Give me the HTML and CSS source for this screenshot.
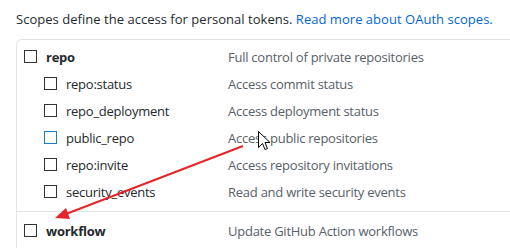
FILE: index.html
```html
<!DOCTYPE html>
<html>
<head>
<meta charset="utf-8">
<link rel="stylesheet" href="styles.css">
</head>
<body>
<div class="page">
  <p class="intro">Scopes define the access for personal tokens. <a href="#">Read more about OAuth scopes.</a></p>
  <div class="box">
    <div class="group">
      <div class="row top"><span class="cb"></span><span class="name">repo</span><span class="desc">Full control of private repositories</span></div>
      <div class="row sub"><span class="cb"></span><span class="name">repo:status</span><span class="desc">Access commit status</span></div>
      <div class="row sub"><span class="cb"></span><span class="name">repo_deployment</span><span class="desc">Access deployment status</span></div>
      <div class="row sub"><span class="cb hover"></span><span class="name">public_repo</span><span class="desc">Access public repositories</span></div>
      <div class="row sub"><span class="cb"></span><span class="name">repo:invite</span><span class="desc">Access repository invitations</span></div>
      <div class="row sub"><span class="cb"></span><span class="name">security_events</span><span class="desc">Read and write security events</span></div>
    </div>
    <div class="group last">
      <div class="row top"><span class="cb"></span><span class="name">workflow</span><span class="desc">Update GitHub Action workflows</span></div>
    </div>
  </div>
  <svg class="annot" width="510" height="248" viewBox="0 0 510 248">
    <line x1="243" y1="146" x2="66" y2="214" stroke="#e3262a" stroke-width="2"/>
    <polygon points="55,218 66,208 70,219" fill="#e3262a"/>
  </svg>
  <svg class="cursor" width="13" height="20" viewBox="0 0 13 20">
    <path d="M0.5 0.5 L0.5 16.5 L4.5 12.5 L7 18.5 L9.5 17.5 L7 11.5 L12 11.5 Z" fill="#fff" stroke="#000" stroke-width="1" stroke-linejoin="miter"/>
  </svg>
</div>
</body>
</html>
```

FILE: styles.css
```css
* { box-sizing: border-box; }
html, body { margin: 0; padding: 0; background: #fff; }
body {
  font-family: "Open Sans", "Noto Sans", "Liberation Sans", sans-serif;
  font-size: 13px;
  color: #24292e;
  width: 510px;
  height: 248px;
  overflow: hidden;
}
.page {
  position: relative;
  padding: 9px 0 0 16px;
  width: 510px;
  height: 248px;
}
.intro {
  margin: 0;
  line-height: 20px;
  color: #24292e;
  white-space: nowrap;
  letter-spacing: 0.03px;
}
.intro a { color: #0366d6; text-decoration: none; }
.box {
  margin-top: 10px;
  border: 1px solid #e1e4e8;
  border-right: 0;
  border-radius: 6px 0 0 6px;
}
.group { padding: 3px 0 6px 7px; }
.group.last { border-top: 1px solid #e1e4e8; padding: 5px 0 8px 7px; }
.row {
  display: grid;
  grid-template-columns: 204px 1fr;
  align-items: center;
  height: 27px;
  letter-spacing: -0.25px;
}
.row > .cb { grid-column: 1; grid-row: 1; }
.row > .name { grid-column: 1; grid-row: 1; }
.row > .desc { grid-column: 2; grid-row: 1; color: #586069; white-space: nowrap; }
.cb {
  width: 13px;
  height: 13px;
  border: 1px solid #333;
  background: #fff;
}
.cb.hover { border-color: #1a7bc8; }
.top .name { padding-left: 22px; font-weight: 700; }
.sub .cb { margin-left: 20px; }
.sub .name { padding-left: 42px; }
.annot { position: absolute; left: 0; top: 0; pointer-events: none; }
.cursor { position: absolute; left: 258px; top: 131px; }
```
